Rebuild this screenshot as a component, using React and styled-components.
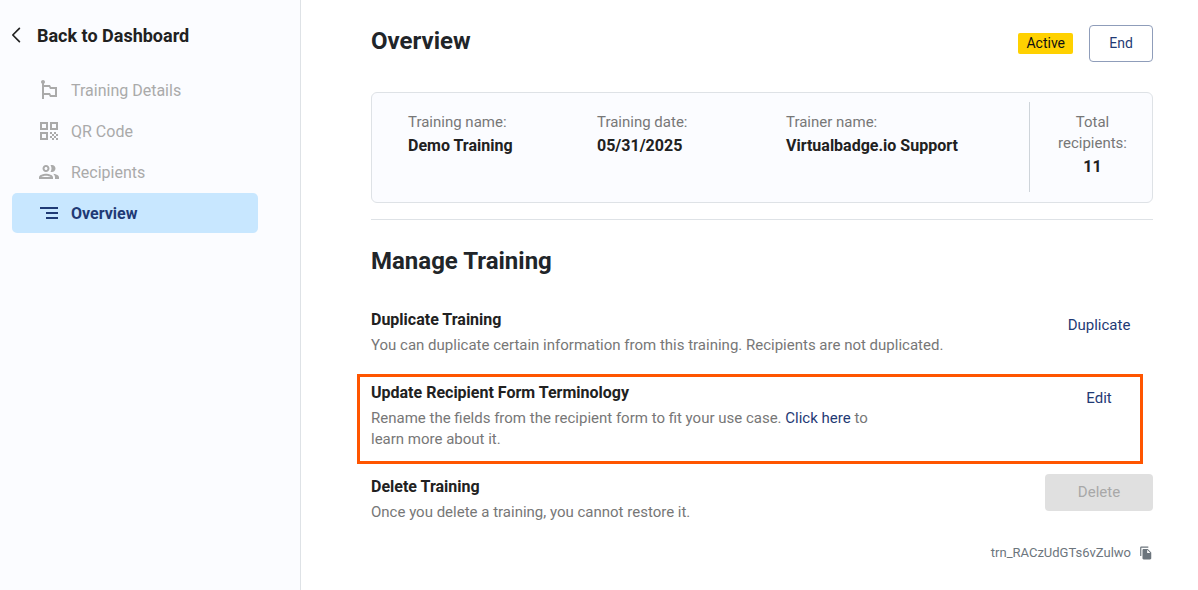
import styled, { createGlobalStyle } from 'styled-components';
import {
	MdEmojiFlags,
	MdFileCopy,
	MdOutlinePeople,
	MdQrCode,
	MdSegment,
} from 'react-icons/md';

const menu = [
	{ label: 'Training Details', Icon: MdEmojiFlags },
	{ label: 'QR Code', Icon: MdQrCode },
	{ label: 'Recipients', Icon: MdOutlinePeople },
	{ label: 'Overview', Icon: MdSegment, active: true },
];

const details = [
	{ label: 'Training name:', value: 'Demo Training' },
	{ label: 'Training date:', value: '05/31/2025' },
	{ label: 'Trainer name:', value: 'Virtualbadge.io Support' },
];

export default function App() {
	return (
		<Page>
			<GlobalStyle />
			<Sidebar>
				<BackLink href="#dashboard">
					<BackIcon viewBox="0 0 16 16" aria-hidden="true">
						<path d="M11.4 1.4 4.8 8l6.6 6.6" />
					</BackIcon>
					Back to Dashboard
				</BackLink>
				<Menu>
					{menu.map(({ label, Icon, active }) => (
						<MenuLink key={label} href="#training" $active={active}>
							<Icon size={24} />
							{label}
						</MenuLink>
					))}
				</Menu>
			</Sidebar>
			<Main>
				<Header>
					<Title>Overview</Title>
					<Status>Active</Status>
					<OutlineButton>End</OutlineButton>
				</Header>
				<Summary>
					<Details>
						{details.map(({ label, value }) => (
							<div key={label}>
								<Text>{label}</Text>
								<Value>{value}</Value>
							</div>
						))}
					</Details>
					<Total>
						<Text>Total recipients:</Text>
						<Value>11</Value>
					</Total>
				</Summary>
				<Divider />
				<Title as="h2">Manage Training</Title>
				<Settings>
					<Setting>
						<SettingText>
							<Subtitle>Duplicate Training</Subtitle>
							<Text>
								You can duplicate certain information from this training. Recipients are not duplicated.
							</Text>
						</SettingText>
						<TextButton>Duplicate</TextButton>
					</Setting>
					<Setting>
						<SettingText>
							<Subtitle>Update Recipient Form Terminology</Subtitle>
							<Text>
								Rename the fields from the recipient form to fit your use case.{' '}
								<HelpLink href="#terminology">Click here</HelpLink> to
								<br />
								learn more about it.
							</Text>
						</SettingText>
						<TextButton>Edit</TextButton>
						<Highlight />
					</Setting>
					<Setting>
						<SettingText>
							<Subtitle>Delete Training</Subtitle>
							<Text>Once you delete a training, you cannot restore it.</Text>
						</SettingText>
						<DeleteButton disabled>Delete</DeleteButton>
					</Setting>
				</Settings>
				<TrainingId>
					trn_RACzUdGTs6vZulwo
					<CopyButton aria-label="Copy training ID">
						<MdFileCopy size={14} />
					</CopyButton>
				</TrainingId>
			</Main>
		</Page>
	);
}

const GlobalStyle = createGlobalStyle`
	* {
		box-sizing: border-box;
	}

	body {
		margin: 0;
		background: #ffffff;
		color: #212529;
		font-family: Roboto, sans-serif;
		font-size: 16px;
	}

	h1, h2, h3, p {
		margin: 0;
	}

	a {
		text-decoration: none;
	}

	button {
		font-family: inherit;
		cursor: pointer;
	}
`;

const Page = styled.div`
	display: flex;
	min-height: 100vh;
`;

const Sidebar = styled.aside`
	flex: none;
	width: 301px;
	padding: 23px 42px 24px 8px;
	background: #fbfcff;
	border-right: 1px solid #dee2e6;
`;

const BackLink = styled.a`
	display: flex;
	align-items: center;
	gap: 13px;
	height: 24px;
	color: #212121;
	font-size: 18px;
	font-weight: 700;
`;

const BackIcon = styled.svg`
	width: 16px;
	height: 16px;
	fill: none;
	stroke: currentColor;
	stroke-width: 1.7;
	stroke-linecap: round;
	stroke-linejoin: round;
`;

const Menu = styled.nav`
	display: flex;
	flex-direction: column;
	gap: 1px;
	margin: 23px 0 0 4px;
`;

const MenuLink = styled.a`
	display: flex;
	align-items: center;
	gap: 10px;
	height: 40px;
	padding-left: 25px;
	border-radius: 5px;
	background: ${({ $active }) => ($active ? '#c8e7ff' : 'transparent')};
	color: ${({ $active }) => ($active ? '#1f3a75' : '#aaaaaa')};
	font-weight: ${({ $active }) => ($active ? 700 : 400)};
`;

const Main = styled.main`
	flex: 1;
	min-width: 0;
	padding: 25px 45px 25px 70px;
`;

const Header = styled.header`
	display: flex;
	align-items: center;
	gap: 16px;
`;

const Title = styled.h1`
	flex: 1;
	align-self: flex-start;
	font-size: 24px;
	line-height: 33px;
	font-weight: 700;
`;

const Status = styled.span`
	padding: 0 8px;
	border-radius: 2px;
	background: #ffd100;
	color: #111111;
	font-size: 14px;
	line-height: 21px;
`;

const Button = styled.button`
	height: 37px;
	padding: 0 0 2px;
	border: 1px solid transparent;
	border-radius: 4px;
	background: transparent;
	color: #1f3a75;
	font-size: 14px;
`;

const OutlineButton = styled(Button)`
	width: 64px;
	border-color: #8f9dba;
	background: #ffffff;
`;

const TextButton = styled(Button)`
	width: 108px;
	font-size: 15px;
`;

const DeleteButton = styled(TextButton)`
	background: #e0e0e0;
	color: #a8a8a8;
	cursor: default;
`;

const Summary = styled.section`
	display: flex;
	margin-top: 30px;
	padding: 9px 0 10px 36px;
	border: 1px solid #dee2e6;
	border-radius: 6px;
	background: #fbfcff;
`;

const Details = styled.div`
	flex: 1;
	display: grid;
	grid-template-columns: 7fr 7fr 9fr;
	padding-top: 10px;
`;

const Total = styled.div`
	width: 123px;
	padding: 10px 22px 13px 25px;
	border-left: 1px solid #ced4da;
	text-align: center;
`;

const Text = styled.p`
	color: #777777;
	font-size: 15px;
	line-height: 21px;
`;

const Value = styled.p`
	margin-top: 1px;
	color: #212121;
	font-weight: 700;
	line-height: 24px;
`;

const Divider = styled.hr`
	margin: 16px 0 25px;
	border: 0;
	border-top: 1px solid #dee2e6;
`;

const Settings = styled.div`
	display: flex;
	flex-direction: column;
	gap: 24px;
	margin-top: 29px;
`;

const Setting = styled.section`
	position: relative;
	display: flex;
	justify-content: space-between;
	align-items: flex-start;
`;

const SettingText = styled.div`
	flex: 1;
	padding-top: 1px;
`;

const Subtitle = styled.h3`
	margin-bottom: 3px;
	color: #212121;
	font-size: 16px;
	font-weight: 700;
	line-height: 24px;
`;

const HelpLink = styled.a`
	color: #1f3a75;
`;

// frame drawn over the setting, it takes no room in the list
const Highlight = styled.div`
	position: absolute;
	inset: -6px 10px -14px -14px;
	border: 3px solid #ff5500;
	pointer-events: none;
`;

const TrainingId = styled.div`
	display: flex;
	justify-content: flex-end;
	align-items: center;
	gap: 8px;
	margin-top: 20px;
	color: #6c757d;
	font-size: 13px;
	line-height: 20px;
`;

const CopyButton = styled.button`
	display: flex;
	padding: 0;
	border: 0;
	background: none;
	color: inherit;
`;
